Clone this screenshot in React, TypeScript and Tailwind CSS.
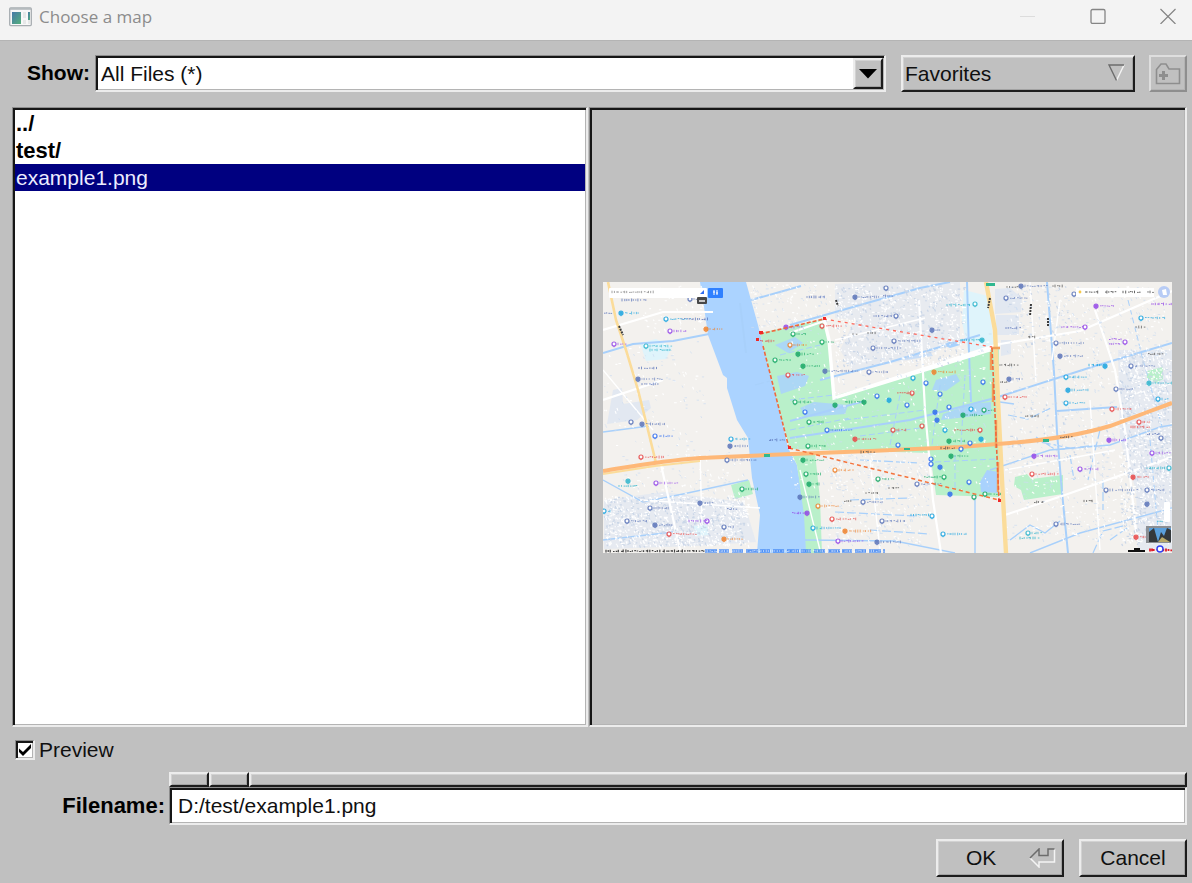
import React, { useState } from "react";

const DOWN =
  "border-t border-l border-r-2 border-b-2 border-t-[#8c8c8c] border-l-[#8c8c8c] border-r-[#ececec] border-b-[#ececec] pt-[2px] pl-[2px] pr-px pb-px shadow-[inset_2px_2px_0_#161616,inset_-1px_-1px_0_#b4b4b4]";
const UP =
  "border-2 border-t-[#ececec] border-l-[#ececec] border-r-[#1c1c1c] border-b-[#1c1c1c] bg-[#c0c0c0] shadow-[inset_1px_1px_0_#d2d2d2,inset_-1px_-1px_0_#a2a2a2]";

/* ---------- map preview ---------- */

function makeRandom(seed: number) {
  let s = seed;
  return () => {
    s = (s * 16807) % 2147483647;
    return s / 2147483647;
  };
}

type Zone = [number, number, number, number, number];

const whiteZones: Zone[] = [
  [834, 284, 130, 80, 520],
  [604, 496, 145, 50, 620],
  [1118, 348, 53, 195, 700],
  [640, 286, 65, 50, 60],
  [604, 340, 100, 110, 60],
  [790, 330, 200, 160, 260],
  [1006, 286, 160, 110, 260],
  [1006, 400, 110, 140, 220],
  [825, 456, 105, 90, 160],
  [620, 450, 125, 45, 60],
  [750, 284, 80, 45, 70],
];

const blueZones: Zone[] = [
  [836, 286, 128, 80, 300],
  [604, 496, 140, 50, 320],
  [1120, 350, 50, 195, 420],
  [1008, 286, 60, 60, 50],
  [1010, 400, 100, 80, 50],
];

function specks(zones: Zone[], seed: number) {
  const r = makeRandom(seed);
  return zones
    .map(([x, y, w, h, n]) =>
      Array.from({ length: n }, () => {
        const px = (x + r() * w).toFixed(1);
        const py = (y + r() * h).toFixed(1);
        const len = (0.8 + r() * 2.2).toFixed(1);
        return r() > 0.5 ? `M${px} ${py}h${len}` : `M${px} ${py}l1 ${len}`;
      }).join("")
    )
    .join("");
}

const NAVY = "#5872b8";
const BLUE = "#2f6cf0";
const SKY = "#16a3e0";
const RED = "#e84444";
const GREEN = "#16a765";
const PURPLE = "#9345e8";
const ORANGE = "#f08028";
const TEAL = "#2cb4cc";
const DARK = "#555555";

type Pin = [number, number, string, number];

const pins: Pin[] = [
  [621, 313, SKY, 14], [666, 319, SKY, 20], [670, 331, PURPLE, 14], [706, 329, ORANGE, 14], [614, 344, PURPLE, 8],
  [646, 346, TEAL, 22], [638, 379, NAVY, 20], [690, 299, NAVY, 9], [631, 422, NAVY, 0], [642, 424, NAVY, 20],
  [655, 436, BLUE, 14], [641, 457, RED, 20], [628, 481, TEAL, 0], [656, 483, PURPLE, 17], [731, 439, SKY, 15],
  [730, 446, NAVY, 15], [727, 460, NAVY, 27], [742, 489, GREEN, 12], [700, 503, NAVY, 10], [650, 508, NAVY, 15],
  [627, 521, NAVY, 16], [655, 525, NAVY, 14], [707, 521, PURPLE, 0], [669, 534, RED, 24], [724, 539, ORANGE, 14],
  [724, 527, NAVY, 6], [604, 511, SKY, 4], [786, 327, PURPLE, 12], [793, 334, GREEN, 10], [790, 345, ORANGE, 12],
  [798, 354, GREEN, 12], [775, 360, GREEN, 12], [788, 375, RED, 12], [803, 366, GREEN, 14], [822, 326, RED, 15],
  [822, 342, GREEN, 8], [825, 371, NAVY, 28], [795, 402, GREEN, 12], [805, 412, BLUE, 0], [835, 405, GREEN, 0],
  [886, 288, NAVY, 0], [896, 316, NAVY, 0], [855, 297, NAVY, 22], [894, 341, NAVY, 23], [873, 348, NAVY, 24],
  [932, 330, NAVY, 5], [869, 372, NAVY, 16], [913, 378, SKY, 0], [934, 372, ORANGE, 18], [926, 383, BLUE, 0],
  [940, 394, BLUE, 0], [889, 400, SKY, 0], [907, 405, BLUE, 0], [877, 396, BLUE, 0], [864, 402, GREEN, 0],
  [912, 393, RED, 0], [949, 407, BLUE, 0], [935, 412, BLUE, 0], [971, 409, SKY, 0], [984, 410, GREEN, 6],
  [963, 415, GREEN, 14], [983, 382, BLUE, 0], [975, 304, TEAL, 0], [982, 340, TEAL, 0], [827, 430, BLUE, 20],
  [809, 422, GREEN, 12], [855, 439, RED, 19], [893, 430, RED, 11], [922, 426, RED, 0], [937, 420, BLUE, 0],
  [945, 430, SKY, 0], [980, 430, RED, 0], [949, 441, GREEN, 14], [970, 443, BLUE, 0], [961, 449, BLUE, 0],
  [981, 439, SKY, 0], [898, 445, BLUE, 0], [808, 446, GREEN, 14], [803, 460, GREEN, 17], [835, 470, ORANGE, 14],
  [806, 474, GREEN, 12], [809, 484, GREEN, 7], [878, 479, GREEN, 12], [917, 484, NAVY, 20], [951, 456, GREEN, 12],
  [931, 459, BLUE, 0], [931, 464, BLUE, 0], [940, 467, BLUE, 0], [969, 482, BLUE, 0], [944, 477, GREEN, 0],
  [950, 494, BLUE, 0], [974, 497, GREEN, 0], [985, 494, GREEN, 12], [800, 497, NAVY, 15], [818, 506, ORANGE, 17],
  [863, 502, NAVY, 17], [807, 513, PURPLE, 0], [832, 519, RED, 20], [813, 528, SKY, 24], [845, 531, ORANGE, 24],
  [838, 541, PURPLE, 20], [882, 521, NAVY, 19], [877, 542, NAVY, 20], [932, 516, SKY, 0], [943, 534, SKY, 20],
  [1021, 286, NAVY, 22], [1006, 298, NAVY, 17], [1074, 294, NAVY, 0], [1096, 306, PURPLE, 15], [1085, 327, PURPLE, 0],
  [1056, 343, NAVY, 25], [1060, 356, NAVY, 20], [1125, 342, PURPLE, 0], [1141, 318, SKY, 20], [1105, 366, SKY, 0],
  [1131, 366, NAVY, 20], [1066, 377, SKY, 17], [1068, 390, SKY, 16], [1066, 403, SKY, 16], [1116, 389, NAVY, 15],
  [1149, 383, TEAL, 20], [1158, 399, SKY, 5], [1005, 397, RED, 18], [1009, 379, NAVY, 10], [1112, 409, RED, 15],
  [1139, 422, RED, 7], [1109, 440, PURPLE, 14], [1161, 438, NAVY, 0], [1152, 453, PURPLE, 14], [1034, 456, PURPLE, 21],
  [1080, 469, PURPLE, 14], [1032, 474, RED, 22], [1133, 477, RED, 12], [1106, 490, NAVY, 27], [1147, 490, NAVY, 13],
  [1147, 504, NAVY, 0], [1056, 524, NAVY, 20], [1028, 533, TEAL, 10], [1136, 537, RED, 10], [1169, 468, TEAL, 0],
];

type Caption = [number, number, string, number];

const captions: Caption[] = [
  [622, 300, NAVY, 24], [682, 319, NAVY, 26], [639, 368, NAVY, 18], [642, 384, NAVY, 16], [604, 313, NAVY, 8],
  [650, 350, TEAL, 20], [619, 486, TEAL, 18], [689, 521, PURPLE, 17], [807, 297, NAVY, 18], [874, 316, NAVY, 18],
  [897, 393, RED, 14], [845, 402, GREEN, 18], [853, 334, DARK, 4], [868, 333, DARK, 8], [947, 305, TEAL, 24],
  [960, 340, TEAL, 22], [866, 493, DARK, 12], [889, 488, DARK, 10], [844, 501, DARK, 9], [922, 429, ORANGE, 0],
  [955, 430, RED, 22], [924, 477, GREEN, 16], [911, 515, SKY, 18], [1007, 287, DARK, 10], [1053, 286, DARK, 11],
  [1061, 327, PURPLE, 22], [1028, 337, DARK, 9], [1109, 339, PURPLE, 12], [1109, 344, PURPLE, 12], [1151, 304, PURPLE, 21],
  [1000, 365, DARK, 18], [1089, 365, SKY, 13], [1136, 327, DARK, 8], [1148, 354, DARK, 14], [1025, 416, DARK, 14],
  [1131, 427, RED, 18], [1147, 434, NAVY, 12], [1147, 468, TEAL, 18], [1034, 502, DARK, 10], [1084, 501, DARK, 9],
  [1020, 538, TEAL, 18], [1157, 521, TEAL, 12], [792, 513, PURPLE, 13], [861, 452, DARK, 14], [941, 448, DARK, 14],
  [1060, 437, DARK, 12], [760, 341, RED, 13], [1006, 328, NAVY, 14], [727, 509, NAVY, 10], [769, 440, NAVY, 17],
  [883, 296, NAVY, 10], [855, 287, NAVY, 0], [1000, 382, DARK, 8],
];

function letters(x: number, y: number, width: number, r: () => number) {
  let d = "";
  for (let cx = x; cx < x + width; cx += 1.6 + r() * 1.2) {
    const h = 1.2 + r() * 1.8;
    d += r() > 0.45 ? `M${cx.toFixed(1)} ${(y - h / 2).toFixed(1)}v${h.toFixed(1)}` : `M${cx.toFixed(1)} ${(y + r() - 0.5).toFixed(1)}h1.6`;
  }
  return d;
}

function MapPreview() {
  const r = makeRandom(77);
  return (
    <svg viewBox="603 282 569 271" className="block w-full" role="img" aria-label="Map preview">
      <rect x="603" y="282" width="569" height="271" fill="#f3f1ee" />

      <g fill="#e2e8f1">
        <path d="M835 284l45-2 80 0v58l-38 18-70 12-12-20 15-30-20-2z" opacity=".7" />
        <path d="M604 500l60-8 80 10 12 40-60 4-92 3z" opacity=".8" />
        <path d="M1118 350h54v200h-34l-2-60-16-50z" opacity=".8" />
        <path d="M613 390l9-2 1 16 26-4 2 8-14 12-30 4z" />
        <path d="M995 289l15-1 12 10-1 14-26 2zM996 315h23v20h-23zM1001 340h10v14l-10 2z" />
      </g>
      <path d="M964 290l24 6 6 50-26 6-6-30z" fill="#dff4fb" />
      <path d="M640 343l16-4 16 8-6 12-20 2z" fill="#dff4fb" />
      <path d="M693 526l14-1 2 10-12 1z" fill="#dff4fb" />

      <path
        d="M700 282H746L758 325 763 345 782 420 788 448 797 465 805 515 807 553H757L760 515 752 478 748 438 737 420 727 388V378L723 375 708 335 703 300z"
        fill="#abd3ff"
      />

      <g fill="#b9f0ca">
        <path d="M760 333L824 319 829 340 834 396 990 350 999 347V497L936 495 930 453 790 449 782 420z" />
        <path d="M791 452l24 1 5 46 2 54h-16l-2-38-7-50z" />
        <path d="M731 485l18-5 4 14-18 5z" />
        <path d="M1015 477l12-3 4 5 32-4v19l-39 6-3-10-7-4z" />
        <path d="M1147 371l16-4v12l-7 4-9-5z" />
      </g>

      <g fill="#a9d2fd">
        <path d="M775 345l20-8 8 6-15 10zM777 376l20-4 12 4-4 10-24 8zM800 408l14-6 34 3-3 9-38 3zM936 380l20-6 4 7-14 10-14-1zM943 414l28-10 20-2v12l-50 6z" opacity=".85" />
        <path d="M980 482l7-12 12 2v21l-18-1zM943 345l8-4 9 4-10 3z" />
        <path d="M903 357l28-4 2 3-28 4z" opacity=".5" />
      </g>

      <g fill="none" stroke="#a8d0fb">
        <path d="M603 353l30-9 40-3 36-7M790 325l70-20 60-17 30-6M820 380l70-18 90-27M790 421l75-20M790 438l120-18 85-22 100-32 77-23" strokeWidth="2" />
        <path d="M1047 282l7 90 3 60 5 60 6 61M1057 411l60-4M967 282l2 70 2 50M740 303l6 50M751 300l50-14" strokeWidth="2" />
        <path d="M603 480l40 22 40-8 65-14M603 432l46-6M603 540l70-8M1030 553l50-20 92-25M990 470l60-20 60-5 50-18 12-2M805 540l90 1 60 12M975 498v55M1000 402l14 2M1010 540l20-15 15 8 15-12" strokeWidth="1.4" />
        <path d="M1070 455l4 25M1100 430l-12 50M1103 480v30M1030 440l40 8M1036 437l20 13 40-5M1008 415l20 4 25-12M1093 553l10-22 24-6M860 460l60 3M835 512l80 4M850 500l60-2M870 530l60 4M1110 540l20-14M755 385l15-4" strokeWidth="1.2" strokeDasharray="9 3" />
        <path d="M780 355l40-10M790 400l44-5M845 420l80-10M860 436l60-8M900 395l-10 50M940 385l-8 60M965 375l-4 70M790 430l60-12M935 462l60-3M955 455v35M1128 300l15 60 20 70M1150 440l8 90" strokeWidth="1" strokeDasharray="6 3" />
      </g>

      <g fill="none" stroke="#ffffff">
        <path d="M824 319l5 21 5 58 156-48M834 398l166-54" strokeWidth="3.4" />
        <path d="M919 300l6 110 8 90 8 53M1000 344l80-13 92-40M1005 515l60-20 107-38M603 330l60-18 50 0M1095 310l20 60 10 60 12 110M790 333l40-14M603 400l60-20M660 460l20 90" strokeWidth="2.2" />
        <path d="M835 340l90-22M800 470l20 80M1030 282l6 100M1060 300l-8 60M700 455l2 70M640 500l120 8M1005 470l110-20M870 460l10 90M1090 400l10 150M603 370l50 60" strokeWidth="1.4" />
      </g>

      <path d={specks(blueZones, 913)} stroke="#cbd7e8" strokeWidth="1.3" fill="none" />
      <path d={specks(whiteZones, 411)} stroke="#ffffff" strokeWidth="1.1" fill="none" />
      <path d={specks(whiteZones.slice(4), 2203)} stroke="#cddcf0" strokeWidth=".7" fill="none" />

      <g fill="none" stroke="#fbdc9a">
        <path d="M608 282l8 38 10 30 12 40 10 40 8 33" strokeWidth="2.6" />
        <path d="M986 282l9 48 3 70 4 80 4 73" strokeWidth="4.4" />
        <path d="M603 474l52-8 45-5" strokeWidth="2" />
      </g>
      <path
        d="M603 471C640 465 660 461 700 458L767 455 870 451 960 447 1010 443C1060 439 1090 432 1110 426L1145 413 1172 403"
        fill="none"
        stroke="#feb878"
        strokeWidth="4"
      />
      <path d="M991 352v18M993 382v20M996 420v28M998 462v30M991 348h9" fill="none" stroke="#f0a05a" strokeWidth="2.4" />

      {pins.map(([x, y, color, width], i) => (
        <g key={`p${i}`} stroke={color} fill="none">
          <circle cx={x} cy={y} r="2" fill={i % 3 === 0 ? color : "#ffffff"} strokeWidth="1.2" opacity=".85" />
          <path d={`M${x} ${y + 2}v1.2`} strokeWidth="1" />
          <path d={letters(x + 4, y, width, r)} strokeWidth=".9" opacity=".7" />
        </g>
      ))}
      {captions.map(([x, y, color, width], i) => (
        <path key={`c${i}`} d={letters(x, y, width, r)} stroke={color} strokeWidth="1" fill="none" opacity=".75" />
      ))}

      <path d="M760 334L824 319M763 346L789 448M992 348L999 500" fill="none" stroke="#f0683c" strokeWidth="1.6" strokeDasharray="4 2" />
      <path d="M824 319L992 347" fill="none" stroke="#ff6a5c" strokeWidth="1.3" strokeDasharray="3 4" />
      <path d="M789 448L999 500" fill="none" stroke="#f5743c" strokeWidth="1.5" strokeDasharray="4 3" />
      <path d="M759 331h4v3h-4zM756 338h3v3h-3zM823 317h3v3h-3zM788 446h3v3h-3zM998 499h3v3h-3z" fill="#f02828" />
      <path d="M764 454h6v3h-6zM904 448h6v2h-6zM1043 439h6v3h-6zM986 283h9v3h-9z" fill="#30b890" />
      <path d="M619 326l4 9M990 298l-2 10M836 300l2 6M1031 304l-1 12M1048 318v8" stroke="#3c3c3c" strokeWidth="2" strokeDasharray="2 1" />

      <rect x="609" y="288" width="98" height="10" rx="1" fill="#ffffff" />
      <path d={letters(612, 292, 43, r)} stroke="#9a9a9a" strokeWidth=".9" fill="none" />
      <path d="M700 294l4-4v4z" fill={BLUE} />
      <rect x="708" y="288" width="15" height="10" rx="1" fill="#2f80ff" />
      <path d="M714 290v5m-1-3h2m2-2v5m-1-2h2" stroke="#ffffff" strokeWidth="1" />
      <rect x="697" y="297" width="10" height="7" rx="1" fill="#484848" />
      <path d="M699 301h6" stroke="#ffffff" strokeWidth="1.4" />

      <rect x="1076" y="288" width="78" height="9" fill="#ffffff" />
      <path d={letters(1085, 292, 14, r) + letters(1105, 292, 11, r) + letters(1123, 292, 18, r) + letters(1148, 292, 6, r)} stroke="#555555" strokeWidth=".9" fill="none" />
      <circle cx="1080" cy="292" r="1.4" fill="#f5c84a" />
      <circle cx="1164" cy="292" r="6" fill="#b8ccf5" />
      <path d="M1162 290l4-1 1 6h-4z" fill="#ffffff" />

      <path d={letters(606, 551, 98, r)} stroke="#444444" strokeWidth="1.2" fill="none" />
      <path d="M705 551h180" stroke="#3f86f5" strokeWidth="3.4" strokeDasharray="12 2 10 3 11 3" opacity=".85" />
      <path d={letters(705, 551, 180, r)} stroke="#ffffff" strokeWidth=".6" fill="none" />

      <rect x="1164" y="502" width="6" height="20" rx="1" fill="#ffffff" />
      <rect x="1146" y="526" width="25" height="17" fill="#8b8f94" />
      <path d="M1149 528h22v14h-22z" fill="#5ba0dc" />
      <path d="M1149 542v-10l5-4 4 14zM1171 542v-12l-4-2-3 8-3-4-3 10z" fill="#34393c" />
      <path d="M1158 542l4-5 8 5z" fill="#b9a968" />
      <path d="M1128 551h17M1134 549h6" stroke="#111111" strokeWidth="2" />
      <path d={letters(1150, 550, 21, r)} stroke="#e01c28" strokeWidth="1.8" fill="none" />
      <circle cx="1160" cy="549" r="3" fill="#ffffff" stroke="#2f3ff0" strokeWidth="1.4" />
    </svg>
  );
}

/* ---------- dialog ---------- */

const files = [
  { name: "../", folder: true },
  { name: "test/", folder: true },
  { name: "example1.png", folder: false },
];

export default function App() {
  const [selected, setSelected] = useState("example1.png");
  const [preview, setPreview] = useState(true);
  const [filename, setFilename] = useState("D:/test/example1.png");

  return (
    <div className="flex min-h-screen flex-col bg-[#c0c0c0] font-['Liberation_Sans',Arial,sans-serif] text-[21px] leading-[27px] text-[#101010]">
      <header className="flex h-[41px] items-start justify-between border-b border-[#b4b4b4] bg-[#f3f3f3] pr-4 pl-[9px]">
        <div className="flex items-center gap-[7px] pt-[5px]">
          <svg width="23" height="20" viewBox="0 0 23 20" aria-hidden="true">
            <defs>
              <linearGradient id="app" x1="0" y1="0" x2="1" y2="1">
                <stop offset="0" stopColor="#4779a8" />
                <stop offset="1" stopColor="#55b07c" />
              </linearGradient>
            </defs>
            <rect x=".7" y="1" width="21.6" height="17.6" rx="1" fill="#f8f8f8" stroke="#a7adb1" strokeWidth="1.3" />
            <path d="M1 2h21" stroke="#b4babd" strokeWidth="1.6" />
            <rect x="3" y="5" width="9" height="12" fill="url(#app)" />
            <path d="M14 5h3v6h-3zM14 13h3v4h-3zM19 13h2v4h-2z" fill="#e6e8e8" />
            <rect x="19" y="5" width="2" height="8" fill="url(#app)" />
          </svg>
          <h1 className="font-['Open_Sans','Noto_Sans',sans-serif] text-[17px] leading-6 text-[#8c8c8c]">Choose a map</h1>
        </div>
        <div className="flex gap-[54px] pt-2">
          <button aria-label="Minimize">
            <svg width="16" height="16" viewBox="0 0 16 16" className="block">
              <path d="M0 8.5h15" stroke="#dcdcdc" />
            </svg>
          </button>
          <button aria-label="Maximize">
            <svg width="16" height="16" viewBox="0 0 16 16" className="block">
              <rect x="1" y="1.5" width="14" height="14" rx="1.5" fill="none" stroke="#858585" strokeWidth="1.3" />
            </svg>
          </button>
          <button aria-label="Close">
            <svg width="16" height="16" viewBox="0 0 16 16" className="block">
              <path d="M.5 1l15 15M15.500 1l-15 15" stroke="#858585" strokeWidth="1.2" />
            </svg>
          </button>
        </div>
      </header>

      <main className="flex flex-1 flex-col pt-[14px] pr-[5px] pb-[6px] pl-3">
        <div className="flex h-[37px] items-stretch">
          <label htmlFor="show" className="w-[83px] pt-1 pr-[5px] text-right font-bold text-black">
            Show:
          </label>
          <div className={`relative flex min-w-0 flex-1 ${DOWN}`}>
            <select id="show" className="w-full appearance-none bg-white pb-px pl-[3px] outline-none">
              <option>All Files (*)</option>
            </select>
            <span className={`pointer-events-none absolute top-[2px] right-px bottom-px flex w-[30px] items-center justify-center ${UP}`}>
              <svg width="18" height="10" viewBox="0 0 18 10" aria-hidden="true">
                <path d="M0 0h18L9 9.500z" fill="#000000" />
              </svg>
            </span>
          </div>
          <button className={`ml-[15px] flex w-[234px] items-center justify-between pr-2 pb-px pl-[2px] ${UP}`}>
            Favorites
            <svg width="17" height="18" viewBox="0 0 17 18" fill="none" strokeWidth="1.4" aria-hidden="true">
              <path d="M16 1L8.500 16.500" stroke="#f4f4f4" />
              <path d="M16 1H1l7.500 15.500" stroke="#6c6c6c" />
            </svg>
          </button>
          <button
            aria-label="New folder"
            className="ml-[14px] flex w-[38px] items-center justify-center border-2 border-t-[#dedede] border-r-[#8e8e8e] border-b-[#8e8e8e] border-l-[#dedede] shadow-[inset_-1px_-1px_0_#b4b4b4]"
          >
            <svg width="26" height="22" viewBox="0 0 26 22" fill="none" stroke="#8e8e8e" aria-hidden="true">
              <path d="M1.500 20.500V6.500L6 1h5l3 5h10.500v14.500z" strokeWidth="1.600" />
              <path d="M4 12.500h9M8.500 8v9" strokeWidth="3" />
            </svg>
          </button>
        </div>

        <div className="mt-[15px] flex flex-1">
          <div className={`flex w-[576px] shrink-0 ${DOWN}`}>
            <ul className="w-full bg-white">
              {files.map((file) => (
                <li key={file.name}>
                  <button
                    onClick={() => setSelected(file.name)}
                    className={`block h-[27px] w-full pl-px text-left ${file.folder ? "text-[22px] font-bold text-black" : ""} ${
                      selected === file.name ? "bg-[#000080] text-[#ececff]" : ""
                    }`}
                  >
                    {file.name}
                  </button>
                </li>
              ))}
            </ul>
          </div>
          <div className={`ml-px flex min-w-0 flex-1 items-center ${DOWN}`}>
            <div className="w-full pr-3 pl-[11px]">{preview && <MapPreview />}</div>
          </div>
        </div>

        <label className="mt-[9px] flex items-center gap-1 pl-[3px]">
          <span className={`relative flex size-5 ${DOWN}`}>
            <input
              type="checkbox"
              checked={preview}
              onChange={(e) => setPreview(e.target.checked)}
              className="size-full appearance-none bg-white"
            />
            {preview && (
              <svg viewBox="0 0 14 14" className="pointer-events-none absolute top-[2px] left-[2px] size-[14px]" aria-hidden="true">
                <path d="M1 5.500l4 3.500 8-8v4l-8 8-4-4z" fill="#000000" />
              </svg>
            )}
          </span>
          Preview
        </label>

        <div className="mt-[9px] flex">
          <label htmlFor="filename" className="w-[157px] pt-5 pr-1 text-right text-[22px] font-bold text-black">
            Filename:
          </label>
          <div className="min-w-0 flex-1">
            <div className="flex h-[15px]">
              <button aria-label="D:/" className={`w-10 ${UP}`} />
              <button aria-label="D:/test/" className={`w-10 ${UP}`} />
              <button aria-label="D:/test/example1.png" className={`flex-1 ${UP}`} />
            </div>
            <div className={`flex h-[38px] ${DOWN}`}>
              <input
                id="filename"
                value={filename}
                onChange={(e) => setFilename(e.target.value)}
                className="w-full bg-white pb-px pl-[6px] outline-none"
              />
            </div>
          </div>
        </div>

        <div className="mt-[14px] flex h-[38px] justify-end gap-[15px]">
          <button className={`flex w-32 items-center justify-between pr-[6px] pb-px pl-7 ${UP}`}>
            OK
            <svg width="27" height="20" viewBox="0 0 27 20" fill="none" strokeWidth="1.500" aria-hidden="true">
              <path d="M1 10l9 9v-5h15.500V1" stroke="#f4f4f4" />
              <path d="M1 10l9-9v6.500h9V1h6.500" stroke="#6c6c6c" />
            </svg>
          </button>
          <button className={`w-[108px] pb-px ${UP}`}>Cancel</button>
        </div>
      </main>
    </div>
  );
}
